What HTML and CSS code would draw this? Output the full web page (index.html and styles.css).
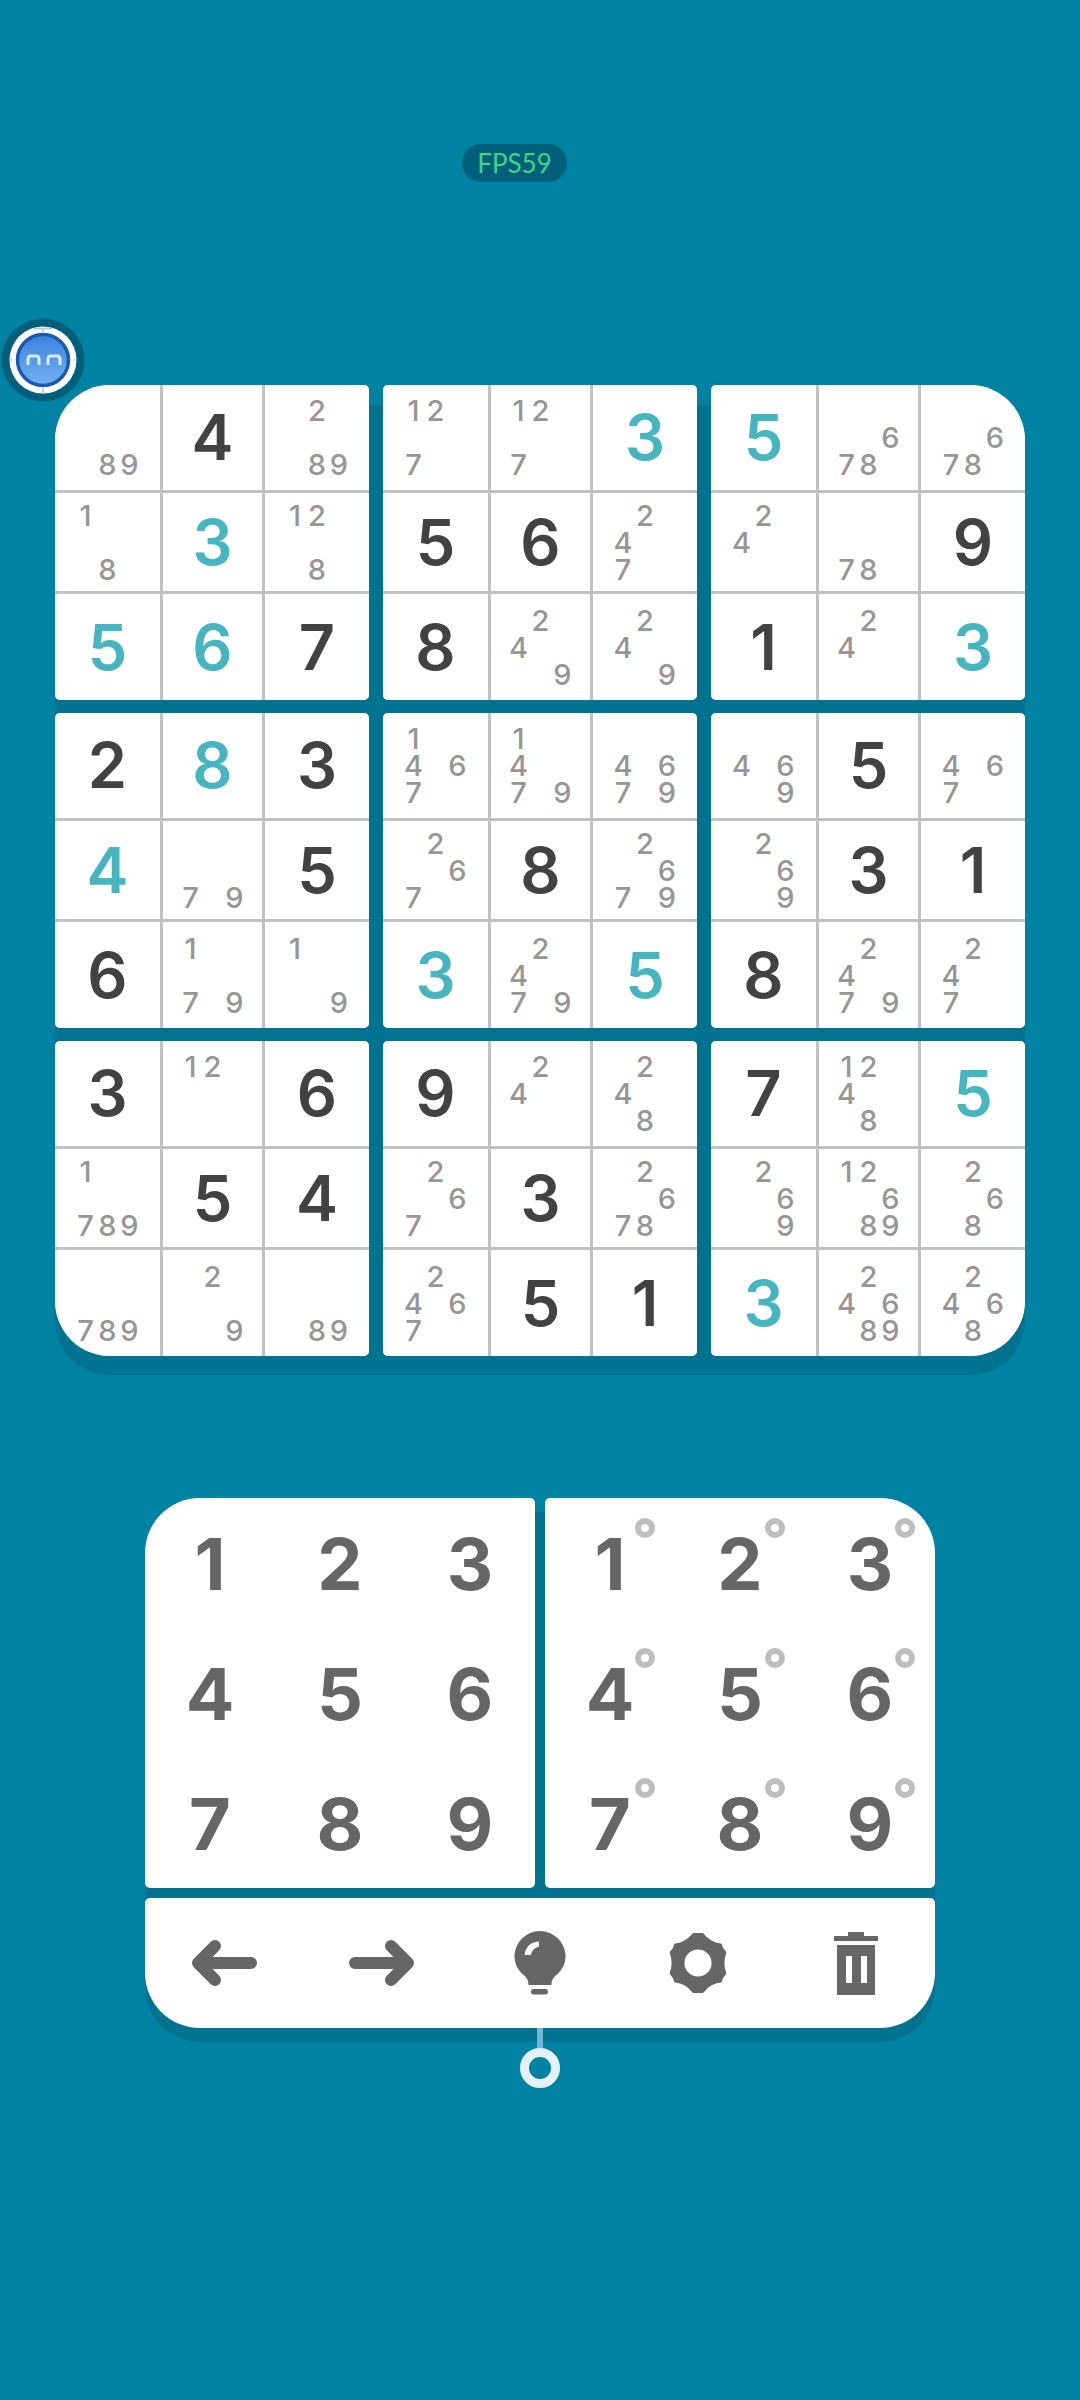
FILE: index.html
```html
<!DOCTYPE html>
<html>

  <head>
    <meta charset="UTF-8">
    <title>Sudoku</title>
    <link rel="stylesheet" href="styles.css">
  </head>

  <body>

    <div class="fps">FPS59</div>

    <svg class="ball" width="84" height="84" viewBox="0 0 84 84">
      <circle cx="42" cy="42" r="41.5" fill="#00607c"/>
      <circle cx="42" cy="42" r="33.5" fill="#fff"/>
      <path d="M33 10.5H51M42 10V14M42 70V76M9 42H11M73 42H75" stroke="#a9c6e4" stroke-width="1.5" fill="none"/>
      <defs>
        <linearGradient id="ballfill" x1="0" y1="0" x2="0" y2="1">
          <stop offset="0" stop-color="#3a82e2"/>
          <stop offset="1" stop-color="#72b2f0"/>
        </linearGradient>
      </defs>
      <circle cx="42" cy="42" r="25.5" fill="url(#ballfill)" stroke="#1c58b2" stroke-width="3.5"/>
      <path d="M27 47V41Q27 38 30 38H35Q38 38 38 41V47M47 47V41Q47 38 50 38H56Q59 38 59 41V47" fill="none" stroke="#dcebfb" stroke-width="3"/>
    </svg>

    <div class="board">

      <div class="block tl">
        <div class="cell notes"><span class="p8">8</span><span class="p9">9</span></div>
        <div class="cell given">4</div>
        <div class="cell notes"><span class="p2">2</span><span class="p8">8</span><span class="p9">9</span></div>
        <div class="cell notes"><span class="p1">1</span><span class="p8">8</span></div>
        <div class="cell placed">3</div>
        <div class="cell notes"><span class="p1">1</span><span class="p2">2</span><span class="p8">8</span></div>
        <div class="cell placed">5</div>
        <div class="cell placed">6</div>
        <div class="cell given">7</div>
      </div>

      <div class="block">
        <div class="cell notes"><span class="p1">1</span><span class="p2">2</span><span class="p7">7</span></div>
        <div class="cell notes"><span class="p1">1</span><span class="p2">2</span><span class="p7">7</span></div>
        <div class="cell placed">3</div>
        <div class="cell given">5</div>
        <div class="cell given">6</div>
        <div class="cell notes"><span class="p2">2</span><span class="p4">4</span><span class="p7">7</span></div>
        <div class="cell given">8</div>
        <div class="cell notes"><span class="p2">2</span><span class="p4">4</span><span class="p9">9</span></div>
        <div class="cell notes"><span class="p2">2</span><span class="p4">4</span><span class="p9">9</span></div>
      </div>

      <div class="block tr">
        <div class="cell placed">5</div>
        <div class="cell notes"><span class="p6">6</span><span class="p7">7</span><span class="p8">8</span></div>
        <div class="cell notes"><span class="p6">6</span><span class="p7">7</span><span class="p8">8</span></div>
        <div class="cell notes"><span class="p2">2</span><span class="p4">4</span></div>
        <div class="cell notes"><span class="p7">7</span><span class="p8">8</span></div>
        <div class="cell given">9</div>
        <div class="cell given">1</div>
        <div class="cell notes"><span class="p2">2</span><span class="p4">4</span></div>
        <div class="cell placed">3</div>
      </div>

      <div class="block">
        <div class="cell given">2</div>
        <div class="cell placed">8</div>
        <div class="cell given">3</div>
        <div class="cell placed">4</div>
        <div class="cell notes"><span class="p7">7</span><span class="p9">9</span></div>
        <div class="cell given">5</div>
        <div class="cell given">6</div>
        <div class="cell notes"><span class="p1">1</span><span class="p7">7</span><span class="p9">9</span></div>
        <div class="cell notes"><span class="p1">1</span><span class="p9">9</span></div>
      </div>

      <div class="block">
        <div class="cell notes"><span class="p1">1</span><span class="p4">4</span><span class="p6">6</span><span class="p7">7</span></div>
        <div class="cell notes"><span class="p1">1</span><span class="p4">4</span><span class="p7">7</span><span class="p9">9</span></div>
        <div class="cell notes"><span class="p4">4</span><span class="p6">6</span><span class="p7">7</span><span class="p9">9</span></div>
        <div class="cell notes"><span class="p2">2</span><span class="p6">6</span><span class="p7">7</span></div>
        <div class="cell given">8</div>
        <div class="cell notes"><span class="p2">2</span><span class="p6">6</span><span class="p7">7</span><span class="p9">9</span></div>
        <div class="cell placed">3</div>
        <div class="cell notes"><span class="p2">2</span><span class="p4">4</span><span class="p7">7</span><span class="p9">9</span></div>
        <div class="cell placed">5</div>
      </div>

      <div class="block">
        <div class="cell notes"><span class="p4">4</span><span class="p6">6</span><span class="p9">9</span></div>
        <div class="cell given">5</div>
        <div class="cell notes"><span class="p4">4</span><span class="p6">6</span><span class="p7">7</span></div>
        <div class="cell notes"><span class="p2">2</span><span class="p6">6</span><span class="p9">9</span></div>
        <div class="cell given">3</div>
        <div class="cell given">1</div>
        <div class="cell given">8</div>
        <div class="cell notes"><span class="p2">2</span><span class="p4">4</span><span class="p7">7</span><span class="p9">9</span></div>
        <div class="cell notes"><span class="p2">2</span><span class="p4">4</span><span class="p7">7</span></div>
      </div>

      <div class="block bl">
        <div class="cell given">3</div>
        <div class="cell notes"><span class="p1">1</span><span class="p2">2</span></div>
        <div class="cell given">6</div>
        <div class="cell notes"><span class="p1">1</span><span class="p7">7</span><span class="p8">8</span><span class="p9">9</span></div>
        <div class="cell given">5</div>
        <div class="cell given">4</div>
        <div class="cell notes"><span class="p7">7</span><span class="p8">8</span><span class="p9">9</span></div>
        <div class="cell notes"><span class="p2">2</span><span class="p9">9</span></div>
        <div class="cell notes"><span class="p8">8</span><span class="p9">9</span></div>
      </div>

      <div class="block">
        <div class="cell given">9</div>
        <div class="cell notes"><span class="p2">2</span><span class="p4">4</span></div>
        <div class="cell notes"><span class="p2">2</span><span class="p4">4</span><span class="p8">8</span></div>
        <div class="cell notes"><span class="p2">2</span><span class="p6">6</span><span class="p7">7</span></div>
        <div class="cell given">3</div>
        <div class="cell notes"><span class="p2">2</span><span class="p6">6</span><span class="p7">7</span><span class="p8">8</span></div>
        <div class="cell notes"><span class="p2">2</span><span class="p4">4</span><span class="p6">6</span><span class="p7">7</span></div>
        <div class="cell given">5</div>
        <div class="cell given">1</div>
      </div>

      <div class="block br">
        <div class="cell given">7</div>
        <div class="cell notes"><span class="p1">1</span><span class="p2">2</span><span class="p4">4</span><span class="p8">8</span></div>
        <div class="cell placed">5</div>
        <div class="cell notes"><span class="p2">2</span><span class="p6">6</span><span class="p9">9</span></div>
        <div class="cell notes"><span class="p1">1</span><span class="p2">2</span><span class="p6">6</span><span class="p8">8</span><span class="p9">9</span></div>
        <div class="cell notes"><span class="p2">2</span><span class="p6">6</span><span class="p8">8</span></div>
        <div class="cell placed">3</div>
        <div class="cell notes"><span class="p2">2</span><span class="p4">4</span><span class="p6">6</span><span class="p8">8</span><span class="p9">9</span></div>
        <div class="cell notes"><span class="p2">2</span><span class="p4">4</span><span class="p6">6</span><span class="p8">8</span></div>
      </div>

    </div>

    <div class="keypad">

      <div class="pad pad-left">
        <div class="key">1</div>
        <div class="key">2</div>
        <div class="key">3</div>
        <div class="key">4</div>
        <div class="key">5</div>
        <div class="key">6</div>
        <div class="key">7</div>
        <div class="key">8</div>
        <div class="key">9</div>
      </div>

      <div class="pad pad-right">
        <div class="key note">1</div>
        <div class="key note">2</div>
        <div class="key note">3</div>
        <div class="key note">4</div>
        <div class="key note">5</div>
        <div class="key note">6</div>
        <div class="key note">7</div>
        <div class="key note">8</div>
        <div class="key note">9</div>
      </div>

      <div class="tools">
        <div class="tool">
          <svg width="68" height="50" viewBox="0 0 68 50"><path d="M61 25H9M25 8L8 25L25 42" fill="none" stroke="#666" stroke-width="12" stroke-linecap="round" stroke-linejoin="round"/></svg>
        </div>
        <div class="tool">
          <svg width="68" height="50" viewBox="0 0 68 50"><path d="M7 25H59M43 8L60 25L43 42" fill="none" stroke="#666" stroke-width="12" stroke-linecap="round" stroke-linejoin="round"/></svg>
        </div>
        <div class="tool">
          <svg width="52" height="64" viewBox="0 0 52 64">
            <path d="M26 0A25.5 25.5 0 0 1 51.5 25.5C51.5 33 48 39 43 43.5C39.5 46.5 37.5 49 37.5 54H14.5C14.5 49 12.5 46.5 9 43.5C4 39 .5 33 .5 25.5A25.5 25.5 0 0 1 26 0Z" fill="#666"/>
            <rect x="17" y="58" width="17" height="5.5" rx="2.7" fill="#666"/>
            <path d="M25 10.6C16 11 11 17 10.7 24H17C17.5 20 20 17 25 15.5Z" fill="#fff"/>
          </svg>
        </div>
        <div class="tool">
          <svg width="62" height="64" viewBox="-32 -32 64 64">
            <path d="M-4.7 -29.7H4.7Q12 -20 23.4 -18.9Q24 -15 28 -10.8Q24 0 28 10.8Q24 15 23.4 18.9Q12 20 4.7 29.7H-4.7Q-12 20 -23.4 18.9Q-24 15 -28 10.8Q-24 0 -28 -10.8Q-24 -15 -23.4 -18.9Q-12 -20 -4.7 -29.7Z" fill="#666" stroke="#666" stroke-width="2.5" stroke-linejoin="round"/>
            <circle r="14" fill="#fff"/>
          </svg>
        </div>
        <div class="tool">
          <svg width="44" height="63" viewBox="0 0 44 63">
            <rect x="14" y="0" width="16" height="5" fill="#666"/>
            <rect x="0" y="4" width="44" height="5" fill="#666"/>
            <path fill-rule="evenodd" d="M3 13H41V63H3ZM12 24V51H18V24ZM27 24V51H33V24Z" fill="#666"/>
          </svg>
        </div>
      </div>

    </div>

    <div class="stem"></div>
    <div class="knob"></div>

  </body>

</html>
```

FILE: styles.css
```css
html
{
  background-color:#0083a3;
}
body
{
  margin:0;
  height:2400px;
  overflow:hidden;
  position:relative;
  font-family:"Inter","Liberation Sans",sans-serif;
  display:flex;
  flex-direction:column;
  align-items:flex-start;
}
.fps
{
  margin:144px 0 0 462px;
  width:105px;
  height:38px;
  line-height:38px;
  border-radius:19px;
  background-color:#00607c;
  color:#3ed680;
  font-family:"Lato",sans-serif;
  font-weight:400;
  font-size:26px;
  text-align:center;
}
.ball
{
  position:absolute;
  left:1px;
  top:318px;
  z-index:2;
}
.board
{
  position:relative;
  z-index:0;
  margin:203px 0 0 55px;
  display:grid;
  grid-template-columns:repeat(3,314px);
  grid-template-rows:repeat(3,315px);
  column-gap:14px;
  row-gap:13px;
}
.board::before
{
  content:"";
  position:absolute;
  left:0;
  right:0;
  top:20px;
  bottom:-19px;
  border-radius:55px;
  background-color:#007390;
  z-index:-1;
}
.block
{
  display:grid;
  grid-template-columns:105px 99px 104px;
  grid-template-rows:105px 98px 106px;
  gap:3px;
  background-color:#c2c2c2;
  border-radius:5px;
  overflow:hidden;
}
.tl { border-top-left-radius:55px }
.tr { border-top-right-radius:55px }
.bl { border-bottom-left-radius:55px }
.br { border-bottom-right-radius:55px }
.cell
{
  background-color:white;
  display:grid;
  place-content:center;
  text-align:center;
}
.given, .placed
{
  font-size:63px;
  font-weight:600;
  line-height:1;
}
.given
{
  color:#424242;
}
.placed
{
  color:#45b5bf;
}
.notes
{
  grid-template-columns:repeat(3,22px);
  grid-template-rows:repeat(3,27px);
  font-size:29px;
  font-weight:500;
  line-height:27px;
  color:#969696;
}
.p1 { grid-area:1/1 }
.p2 { grid-area:1/2 }
.p3 { grid-area:1/3 }
.p4 { grid-area:2/1 }
.p5 { grid-area:2/2 }
.p6 { grid-area:2/3 }
.p7 { grid-area:3/1 }
.p8 { grid-area:3/2 }
.p9 { grid-area:3/3 }
.keypad
{
  position:relative;
  z-index:0;
  margin:142px 0 0 145px;
  display:grid;
  grid-template-columns:390px 390px;
  column-gap:10px;
  row-gap:10px;
}
.keypad::before
{
  content:"";
  position:absolute;
  left:0;
  right:0;
  top:14px;
  bottom:-14px;
  border-radius:55px;
  background-color:#007390;
  z-index:-1;
}
.pad
{
  height:390px;
  background-color:white;
  border-radius:5px;
  display:grid;
  grid-template-columns:repeat(3,1fr);
  grid-template-rows:repeat(3,1fr);
}
.pad-left { border-top-left-radius:55px }
.pad-right { border-top-right-radius:55px }
.key
{
  position:relative;
  display:flex;
  align-items:center;
  justify-content:center;
  color:#666;
  font-size:72px;
  font-weight:700;
}
.note::after
{
  content:"";
  position:absolute;
  left:90px;
  top:20px;
  width:8px;
  height:8px;
  border:6px solid #bdbdbd;
  border-radius:50%;
}
.tools
{
  grid-column:1 / span 2;
  height:130px;
  background-color:white;
  border-radius:5px 5px 55px 55px;
  display:grid;
  grid-template-columns:repeat(5,1fr);
}
.tool
{
  display:flex;
  align-items:center;
  justify-content:center;
}
.tool svg
{
  display:block;
}
.stem
{
  position:relative;
  z-index:1;
  margin-left:537px;
  width:6px;
  height:20px;
  background-color:#6fb9d2;
}
.knob
{
  margin-left:520px;
  width:22px;
  height:22px;
  border:9px solid #e4f2f6;
  border-radius:50%;
  background-color:#0083a3;
}
```
